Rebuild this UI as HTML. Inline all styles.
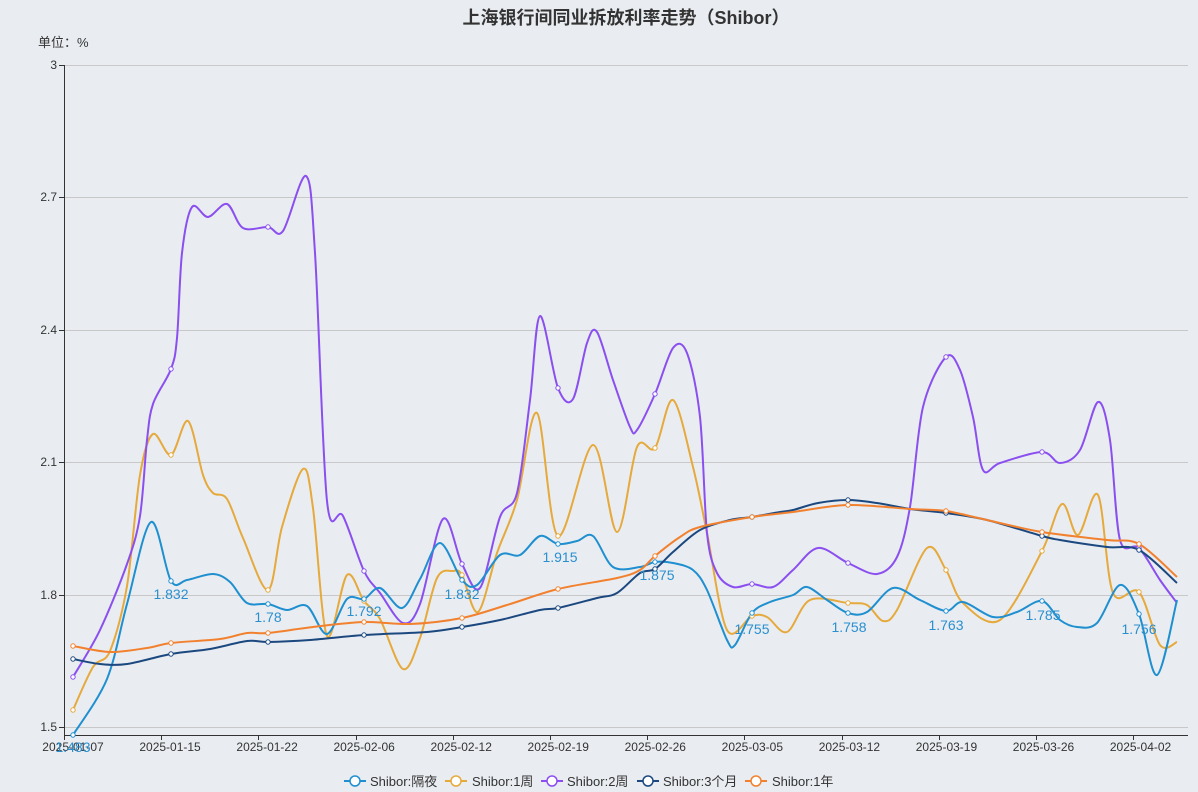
<!DOCTYPE html>
<html><head><meta charset="utf-8"><style>
html,body{margin:0;padding:0;background:#e9edf1;width:1198px;height:792px;overflow:hidden}
svg{display:block}
text{font-family:"Liberation Sans","Noto Sans CJK SC",sans-serif}
</style></head><body>
<svg id="s" width="1198" height="792" xmlns="http://www.w3.org/2000/svg">
<rect width="1198" height="792" fill="#e9edf1"/>
<text x="626" y="24" text-anchor="middle" font-size="18" font-weight="bold" fill="#333">上海银行间同业拆放利率走势（Shibor）</text>
<text x="38" y="47" font-size="13" fill="#333">单位：%</text>
<g stroke="#c8c8c8" stroke-width="1">
<line x1="64" y1="65.5" x2="1188" y2="65.5"/>
<line x1="64" y1="197.5" x2="1188" y2="197.5"/>
<line x1="64" y1="330.5" x2="1188" y2="330.5"/>
<line x1="64" y1="462.5" x2="1188" y2="462.5"/>
<line x1="64" y1="595.5" x2="1188" y2="595.5"/>
<line x1="64" y1="727.5" x2="1188" y2="727.5"/>
</g>
<g stroke="#333" stroke-width="1">
<line x1="64.5" y1="65" x2="64.5" y2="736"/>
<line x1="64" y1="735.5" x2="1188" y2="735.5"/>
<line x1="59" y1="65.5" x2="64" y2="65.5"/><line x1="59" y1="197.5" x2="64" y2="197.5"/>
<line x1="59" y1="330.5" x2="64" y2="330.5"/><line x1="59" y1="462.5" x2="64" y2="462.5"/>
<line x1="59" y1="595.5" x2="64" y2="595.5"/><line x1="59" y1="727.5" x2="64" y2="727.5"/>
<g id="xt"></g>
</g>
<g font-size="12" fill="#333" text-anchor="end">
<text x="57" y="69">3</text><text x="57" y="201">2.7</text><text x="57" y="334">2.4</text>
<text x="57" y="466">2.1</text><text x="57" y="599">1.8</text><text x="57" y="731">1.5</text>
</g>
<g id="xl" font-size="12" fill="#333" text-anchor="middle"></g>
<g id="lines"></g>
<g font-size="14" fill="#2a8fcf" text-anchor="middle">
<text x="73" y="752">1.483</text>
<text x="171" y="599">1.832</text><text x="268" y="622">1.78</text><text x="364" y="616">1.792</text>
<text x="462" y="599">1.832</text><text x="560" y="562">1.915</text><text x="657" y="580">1.875</text>
<text x="752" y="634">1.755</text><text x="849" y="632">1.758</text><text x="946" y="630">1.763</text>
<text x="1043" y="620">1.785</text><text x="1139" y="634">1.756</text>
</g>
<g font-size="13" fill="#333">
<line x1="344" y1="781" x2="366" y2="781" stroke="#1f8fd0" stroke-width="2"/><circle cx="355" cy="781" r="5" fill="#fff" stroke="#1f8fd0" stroke-width="1.5"/><text x="370" y="786">Shibor:隔夜</text>
<line x1="445" y1="781" x2="467" y2="781" stroke="#e6a93c" stroke-width="2"/><circle cx="456" cy="781" r="5" fill="#fff" stroke="#e6a93c" stroke-width="1.5"/><text x="472" y="786">Shibor:1周</text>
<line x1="541" y1="781" x2="563" y2="781" stroke="#8b4ff0" stroke-width="2"/><circle cx="552" cy="781" r="5" fill="#fff" stroke="#8b4ff0" stroke-width="1.5"/><text x="567" y="786">Shibor:2周</text>
<line x1="637" y1="781" x2="659" y2="781" stroke="#1c4880" stroke-width="2"/><circle cx="648" cy="781" r="5" fill="#fff" stroke="#1c4880" stroke-width="1.5"/><text x="663" y="786">Shibor:3个月</text>
<line x1="745" y1="781" x2="767" y2="781" stroke="#f2812f" stroke-width="2"/><circle cx="756" cy="781" r="5" fill="#fff" stroke="#f2812f" stroke-width="1.5"/><text x="772" y="786">Shibor:1年</text>
</g>
</svg>
<script>
var NS="http://www.w3.org/2000/svg";
function el(t,a,p){var e=document.createElementNS(NS,t);for(var k in a)e.setAttribute(k,a[k]);p.appendChild(e);return e;}
var xt=document.getElementById('xt'),xl=document.getElementById('xl');
var labs=["2025-01-07","2025-01-15","2025-01-22","2025-02-06","2025-02-12","2025-02-19","2025-02-26","2025-03-05","2025-03-12","2025-03-19","2025-03-26","2025-04-02"];
for(var i=0;i<12;i++){var tx=Math.round(64+97.2*i)+0.5;el('line',{x1:tx,y1:735,x2:tx,y2:740},xt);
var t=el('text',{x:73+97.05*i,y:751},xl);t.textContent=labs[i];}
var MX=[73,171,268,364,462,558,655,752,848,946,1042,1139];
var S=[
["#e6a93c",[[73,710],[93,667],[110,651],[127,586],[140,475],[153,434],[171,455],[188,421],[203,475],[213,493],[227,499],[243,538],[268,590],[282,527],[303,469],[313,508],[327,636],[347,575],[364,601],[380,619],[403,669],[420,638],[437,578],[453,571],[462,575],[478,612],[497,553],[517,500],[537,413],[558,536],[593,445],[617,532],[637,447],[655,448],[673,400],[693,467],[707,533],[727,630],[752,616],[767,617],[787,632],[810,600],[848,603],[867,605],[883,621],[897,610],[927,548],[946,570],[963,603],[1000,620],[1042,551],[1062,504],[1078,535],[1098,495],[1113,593],[1139,592],[1160,645],[1177,642]]],
["#8b4ff0",[[73,677],[100,630],[127,564],[140,516],[147,440],[153,404],[171,369],[177,338],[182,253],[192,207],[208,217],[227,204],[243,228],[268,227],[283,231],[306,176],[315,253],[327,501],[343,516],[364,571],[380,593],[403,623],[420,604],[443,519],[462,564],[480,588],[500,517],[517,493],[530,400],[540,316],[558,388],[573,399],[587,343],[597,332],[613,380],[630,427],[637,430],[655,394],[673,348],[687,353],[700,417],[707,533],[717,573],[733,587],[752,584],[773,587],[793,570],[818,548],[848,563],[877,574],[897,557],[910,507],[923,407],[946,357],[960,370],[973,417],[983,470],[1000,463],[1042,452],[1060,463],[1080,450],[1098,402],[1110,440],[1120,540],[1139,548],[1160,580],[1177,603]]],
["#1f8fd0",[[73,735],[107,679],[127,604],[151,522],[171,581],[187,580],[213,574],[230,582],[247,603],[268,604],[287,610],[307,606],[327,634],[347,599],[364,599],[380,588],[402,608],[420,579],[440,543],[462,580],[477,585],[500,555],[520,555],[540,536],[558,544],[577,541],[593,536],[613,567],[640,567],[655,562],[673,563],[693,570],[707,590],[727,640],[735,645],[752,613],[770,602],[793,595],[807,587],[827,600],[848,613],[867,612],[893,588],[920,600],[946,611],[963,602],[993,617],[1017,612],[1042,601],[1060,620],[1077,627],[1097,623],[1120,585],[1139,614],[1157,675],[1177,600]]],
["#1c4880",[[73,659],[100,664],[127,664],[171,654],[210,649],[247,641],[268,642],[310,640],[364,635],[427,632],[462,627],[500,620],[540,610],[558,608],[597,598],[617,593],[640,573],[655,569],[673,552],[700,530],[730,520],[752,517],[780,512],[793,510],[818,503],[848,500],[877,503],[910,509],[946,513],[987,520],[1042,536],[1060,540],[1107,547],[1139,550],[1177,583]]],
["#f2812f",[[73,646],[110,652],[147,648],[171,643],[220,639],[247,633],[268,633],[313,627],[364,622],[410,624],[462,618],[507,605],[558,589],[617,578],[640,570],[655,556],[680,537],[700,527],[752,517],[793,512],[848,505],[910,509],[946,511],[987,520],[1042,532],[1107,540],[1139,544],[1177,577]]]
];
var g=document.getElementById('lines');
S.forEach(function(s){var p=s[1],d="M"+p[0][0]+","+p[0][1],k=0.16;
for(var i=0;i<p.length-1;i++){var p0=p[Math.max(0,i-1)],p1=p[i],p2=p[i+1],p3=p[Math.min(p.length-1,i+2)];
var c1x=p1[0]+(p2[0]-p0[0])*k*1.0,c1y=p1[1]+(p2[1]-p0[1])*k*1.0,c2x=p2[0]-(p3[0]-p1[0])*k,c2y=p2[1]-(p3[1]-p1[1])*k;
d+=" C"+c1x.toFixed(1)+","+c1y.toFixed(1)+" "+c2x.toFixed(1)+","+c2y.toFixed(1)+" "+p2[0]+","+p2[1];}
el('path',{d:d,fill:"none",stroke:s[0],"stroke-width":2},g);
s.m=p;});
S.forEach(function(s){s.m.forEach(function(q){for(var j=0;j<MX.length;j++)if(Math.abs(MX[j]-q[0])<=2){el('circle',{cx:q[0],cy:q[1],r:2.2,fill:"#fff",stroke:s[0],"stroke-width":1},g);break;}});});
</script>
</body></html>
